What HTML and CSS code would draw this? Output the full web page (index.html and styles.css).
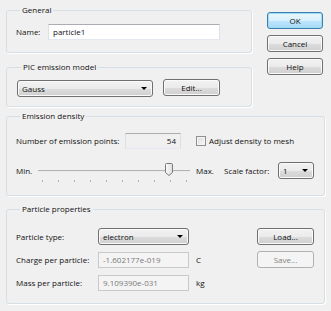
FILE: index.html
```html
<!DOCTYPE html>
<html>
<head>
<meta charset="utf-8">
<link rel="stylesheet" href="styles.css">
</head>
<body>
<div class="dialog">
  <div class="top">
    <div class="top-left">
      <fieldset class="group g-general">
        <legend>General</legend>
        <div class="row">
          <span class="lbl name-lbl">Name:</span>
          <div class="edit name-edit">particle1</div>
        </div>
      </fieldset>
      <fieldset class="group g-pic">
        <legend>PIC emission model</legend>
        <div class="row pic-row">
          <div class="combo combo-gauss"><span>Gauss</span><span class="arrow"></span></div>
          <div class="btn btn-edit">Edit...</div>
        </div>
      </fieldset>
    </div>
    <div class="side-buttons">
      <div class="btn btn-default">OK</div>
      <div class="btn">Cancel</div>
      <div class="btn">Help</div>
    </div>
  </div>

  <fieldset class="group g-emission">
    <legend>Emission density</legend>
    <div class="row em-row1">
      <span class="lbl points-lbl">Number of emission points:</span>
      <div class="edit readonly points-edit">54</div>
      <span class="check"></span>
      <span class="lbl check-lbl">Adjust density to mesh</span>
    </div>
    <div class="row em-row2">
      <span class="lbl min-lbl">Min.</span>
      <svg class="slider" width="152" height="17" viewBox="0 0 152 17">
        <rect x="0" y="8" width="152" height="1" fill="#b4b4b4"/>
        <rect x="0" y="9" width="152" height="1" fill="#e9e9e9"/>
        <g fill="#b0b0b0">
          <rect x="4" y="18" width="1" height="2"/>
          <rect x="20" y="18" width="1" height="2"/>
          <rect x="36" y="18" width="1" height="2"/>
          <rect x="52" y="18" width="1" height="2"/>
          <rect x="68" y="18" width="1" height="2"/>
          <rect x="84" y="18" width="1" height="2"/>
          <rect x="100" y="18" width="1" height="2"/>
          <rect x="116" y="18" width="1" height="2"/>
          <rect x="132" y="18" width="1" height="2"/>
          <rect x="148" y="18" width="1" height="2"/>
        </g>
        <defs>
          <linearGradient id="thumb" x1="0" y1="0" x2="1" y2="0">
            <stop offset="0" stop-color="#fdfdfd"/>
            <stop offset="1" stop-color="#dcdcdc"/>
          </linearGradient>
        </defs>
        <path d="M127.5 2.5 Q127.5 1.5 128.5 1.5 L133.5 1.5 Q134.5 1.5 134.5 2.5 L134.5 10.5 L131 13.5 L127.5 10.5 Z" fill="url(#thumb)" stroke="#7a7a7a" stroke-width="1"/>
      </svg>
      <span class="lbl max-lbl">Max.</span>
      <span class="lbl scale-lbl">Scale factor:</span>
      <div class="combo combo-scale"><span>1</span><span class="arrow"></span></div>
    </div>
  </fieldset>

  <fieldset class="group g-particle">
    <legend>Particle properties</legend>
    <div class="pgrid">
      <span class="lbl">Particle type:</span>
      <div class="combo combo-type"><span>electron</span><span class="arrow"></span></div>
      <span></span>
      <div class="btn">Load...</div>

      <span class="lbl">Charge per particle:</span>
      <div class="edit disabled">-1.602177e-019</div>
      <span class="lbl unit">C</span>
      <div class="btn btn-disabled">Save...</div>

      <span class="lbl">Mass per particle:</span>
      <div class="edit disabled">9.109390e-031</div>
      <span class="lbl unit">kg</span>
      <span></span>
    </div>
  </fieldset>
</div>
</body>
</html>
```

FILE: styles.css
```css
html, body {
  margin: 0;
  padding: 0;
  background: #f0f0f0;
}

body {
  width: 331px;
  height: 311px;
  overflow: hidden;
  font-family: "Open Sans", "Liberation Sans", sans-serif;
  font-size: 8px;
  color: #111111;
}

.dialog {
  padding: 4px 6px 0 6px;
}

.top {
  display: flex;
  gap: 15px;
}

.top-left {
  width: 246px;
  display: flex;
  flex-direction: column;
}

.group {
  margin: 0;
  border: 1px solid #d5dfe5;
  border-radius: 3px;
  box-shadow: 1px 1px 0 #ffffff;
  min-width: 0;
}

.group legend {
  margin-left: 4px;
  padding: 0 2px;
  line-height: 12px;
  height: 12px;
  font-size: 8px;
}

.row {
  display: flex;
  align-items: center;
}

.lbl {
  white-space: nowrap;
  line-height: 16px;
}

/* General */
.g-general {
  padding: 8px 0 12px 9px;
}
.name-lbl {
  width: 32px;
}
.edit {
  box-sizing: border-box;
  height: 16px;
  line-height: 14px;
  padding: 0 4px;
  background: #ffffff;
  border: 1px solid #dbdfe6;
  border-top-color: #abadb3;
  border-bottom-color: #e3e9ef;
  white-space: nowrap;
  overflow: hidden;
}
.name-edit {
  width: 172px;
}

/* PIC */
.g-pic {
  margin-top: 8px;
  padding: 7px 0 9px 10px;
}
.pic-row {
  align-items: flex-start;
  gap: 10px;
}

.combo {
  box-sizing: border-box;
  height: 17px;
  border: 1px solid #707070;
  border-radius: 3px;
  background: linear-gradient(#f2f2f2 0%, #ebebeb 50%, #dddddd 51%, #cfcfcf 100%);
  box-shadow: inset 0 0 0 1px #fafafa;
  display: flex;
  align-items: center;
  justify-content: space-between;
  padding: 0 5px 0 4px;
  line-height: 15px;
}
.arrow {
  width: 0;
  height: 0;
  border-left: 3px solid transparent;
  border-right: 3px solid transparent;
  border-top: 3px solid #000;
}
.combo-gauss {
  width: 136px;
}

.btn {
  box-sizing: border-box;
  height: 17px;
  line-height: 15px;
  text-align: center;
  border: 1px solid #707070;
  border-radius: 3px;
  background: linear-gradient(#f2f2f2 0%, #ebebeb 50%, #dddddd 51%, #cfcfcf 100%);
  box-shadow: inset 0 0 0 1px #fafafa;
}
.btn-edit {
  width: 57px;
  margin-top: -1px;
}
.btn-default {
  border-color: #3c7fb1;
  box-shadow: inset 0 0 0 1px #9ddcf3;
  background: linear-gradient(#eaf6fd 0%, #d9f0fc 50%, #bee6fd 51%, #a7d9f5 100%);
}
.btn-disabled {
  border-color: #adb2b5;
  background: #f4f4f4;
  box-shadow: none;
  color: #838383;
}

.side-buttons {
  width: 56px;
  padding-top: 8px;
  display: flex;
  flex-direction: column;
  gap: 6px;
}

/* Emission */
.g-emission {
  margin-top: 3px;
  padding: 11px 0 16px 9px;
}
.points-lbl {
  width: 109px;
}
.edit.readonly {
  background: #f0f0f0;
}
.points-edit {
  width: 56px;
  text-align: right;
  margin-right: 15px;
}
.check {
  box-sizing: border-box;
  width: 10px;
  height: 10px;
  border: 1px solid #8e8f8f;
  background: linear-gradient(135deg, #dcdcdc, #f8f8f8);
  box-shadow: inset 0 0 0 1px #f4f4f4;
}
.check-lbl {
  margin-left: 3px;
}
.em-row2 {
  margin-top: 13px;
  height: 17px;
}
.min-lbl {
  width: 22px;
}
.slider {
  display: block;
  overflow: visible;
  margin-right: 6px;
}
.max-lbl {
  width: 28px;
}
.scale-lbl {
  width: 54px;
}
.combo-scale {
  width: 36px;
}

/* Particle */
.g-particle {
  margin-top: 7px;
  padding: 13px 10px 12px 9px;
}
.pgrid {
  display: grid;
  grid-template-columns: 82px 91px 1fr 57px;
  grid-auto-rows: 17px;
  row-gap: 6px;
  align-items: center;
}
.edit.disabled {
  background: #f4f4f4;
  color: #7a7a7a;
  border-color: #c9c9c9;
}
.unit {
  padding-left: 7px;
}
```
